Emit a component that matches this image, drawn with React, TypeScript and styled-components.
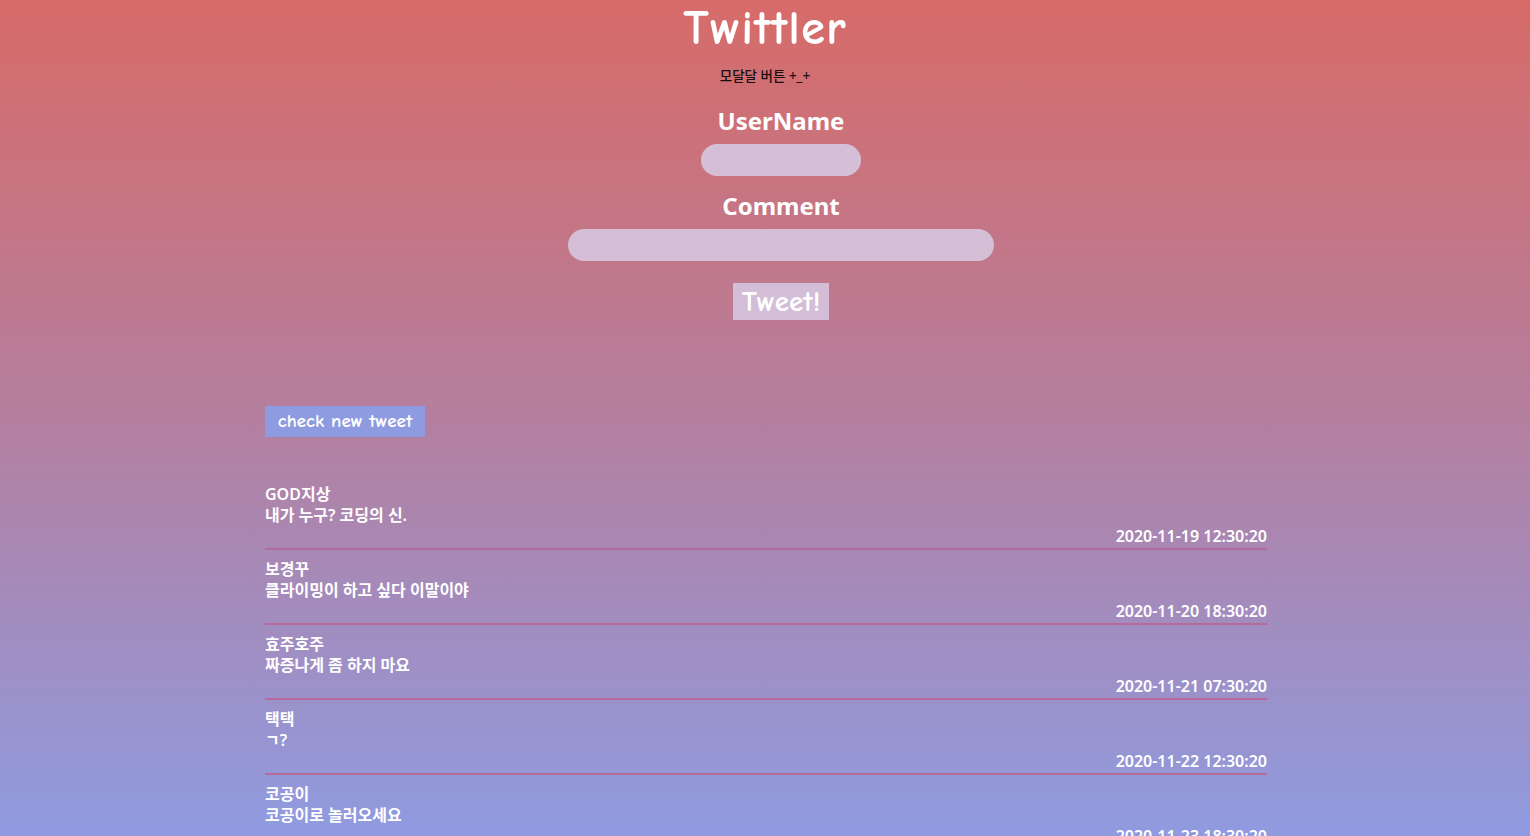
import React from "react";
import styled, { createGlobalStyle } from "styled-components";

const GlobalStyle = createGlobalStyle`
  html, body {
    margin: 0;
    padding: 0;
  }
  body {
    min-height: 836px;
    background: linear-gradient(180deg, #d76b68 0%, #b47f9f 50%, #8f9be0 100%);
    background-attachment: fixed;
    font-family: "Noto Sans", "Noto Sans CJK KR", sans-serif;
  }
`;

const Page = styled.div`
  height: 836px;
  overflow: hidden;
  display: flex;
  flex-direction: column;
  align-items: center;
`;

const Title = styled.h1`
  margin: 2px 0 0;
  font-family: "Comic Sans MS", "Comic Neue", "DejaVu Sans", sans-serif;
  font-size: 49px;
  font-weight: 700;
  line-height: 52px;
  color: #ffffff;
  letter-spacing: 1px;
`;

const ModalButton = styled.div`
  margin-top: 14px;
  font-family: "Noto Sans", "Noto Sans CJK KR", sans-serif;
  font-size: 13.5px;
  font-weight: 500;
  line-height: 16px;
  color: #1a0d10;
`;

const Form = styled.form`
  display: flex;
  flex-direction: column;
  align-items: center;
  padding-left: 32px;
  margin-top: 22px;
`;

const Label = styled.label`
  font-family: "Noto Sans", "Noto Sans CJK KR", sans-serif;
  font-size: 24px;
  font-weight: 700;
  line-height: 30px;
  color: #ffffff;
`;

const Field = styled.input<{ $w: number }>`
  width: ${(p) => p.$w}px;
  height: 32px;
  box-sizing: border-box;
  border: none;
  border-radius: 16px;
  background: #d4bfd7;
  margin: 8px 0 15px;
  outline: none;
  padding: 0 14px;
`;

const TweetButton = styled.button`
  margin-top: 7px;
  width: 96px;
  height: 37px;
  border: none;
  background: #d4bed7;
  color: #ffffff;
  font-family: "Comic Sans MS", "Comic Neue", "DejaVu Sans", sans-serif;
  font-size: 29px;
  font-weight: 700;
  line-height: 37px;
  padding: 0;
`;

const Feed = styled.section`
  width: 1002px;
  margin: 86px 0 0 2px;
  display: flex;
  flex-direction: column;
  align-items: flex-start;
`;

const CheckButton = styled.button`
  width: 160px;
  height: 31px;
  border: none;
  padding: 0;
  background: #8f9be0;
  color: #ffffff;
  font-family: "Comic Sans MS", "Comic Neue", "DejaVu Sans", sans-serif;
  font-size: 19px;
  font-weight: 700;
  line-height: 31px;
`;

const List = styled.ul`
  list-style: none;
  margin: 38px 0 0;
  padding: 0;
  width: 100%;
`;

const Item = styled.li`
  padding: 9px 0 1px;
  border-bottom: 2px solid #b46b9b;
  color: #ffffff;
  font-family: "Noto Sans", "Noto Sans CJK KR", sans-serif;
  font-size: 16px;
  font-weight: 600;
  line-height: 21px;
`;

const Line = styled.div<{ $right?: boolean }>`
  text-align: ${(p) => (p.$right ? "right" : "left")};
`;

const tweets = [
  { user: "GOD지상", msg: "내가 누구? 코딩의 신.", date: "2020-11-19 12:30:20" },
  { user: "보경꾸", msg: "클라이밍이 하고 싶다 이말이야", date: "2020-11-20 18:30:20" },
  { user: "효주호주", msg: "짜증나게 좀 하지 마요", date: "2020-11-21 07:30:20" },
  { user: "택택", msg: "ㄱ?", date: "2020-11-22 12:30:20" },
  { user: "코공이", msg: "코공이로 놀러오세요", date: "2020-11-23 18:30:20" },
];

export default function App() {
  return (
    <>
      <GlobalStyle />
      <Page>
        <Title>Twittler</Title>
        <ModalButton>모달달 버튼 +_+</ModalButton>
        <Form onSubmit={(e) => e.preventDefault()}>
          <Label>UserName</Label>
          <Field $w={160} />
          <Label>Comment</Label>
          <Field $w={426} />
          <TweetButton type="submit">Tweet!</TweetButton>
        </Form>
        <Feed>
          <CheckButton>check new tweet</CheckButton>
          <List>
            {tweets.map((t) => (
              <Item key={t.date}>
                <Line>{t.user}</Line>
                <Line>{t.msg}</Line>
                <Line $right>{t.date}</Line>
              </Item>
            ))}
          </List>
        </Feed>
      </Page>
    </>
  );
}
